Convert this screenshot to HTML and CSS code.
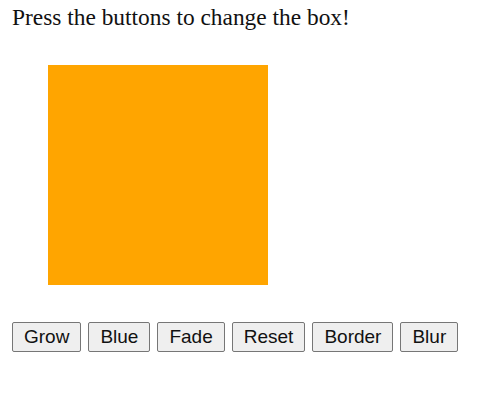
FILE: index.html
```html
<!DOCTYPE html>
<html>
<head>
<meta charset="utf-8">
<link rel="stylesheet" href="styles.css">
</head>
<body>
<div class="page">
  <p class="intro">Press the buttons to change the box!</p>
  <div class="box"></div>
  <div class="controls">
    <button class="btn">Grow</button>
    <button class="btn">Blue</button>
    <button class="btn">Fade</button>
    <button class="btn">Reset</button>
    <button class="btn">Border</button>
    <button class="btn">Blur</button>
  </div>
</div>
</body>
</html>
```

FILE: styles.css
```css
html, body {
  margin: 0;
  padding: 0;
  background: #ffffff;
}
.page {
  padding: 4px 12px 0 12px;
}
.intro {
  margin: 0;
  font-family: "Liberation Serif", "Times New Roman", serif;
  font-size: 23.4px;
  line-height: 26px;
  color: #111111;
}
.box {
  width: 220px;
  height: 220px;
  background: #ffa500;
  margin: 35px 0 0 36px;
}
.controls {
  display: flex;
  gap: 7px;
  margin-top: 37px;
}
.btn {
  font-family: "Liberation Sans", Arial, sans-serif;
  font-size: 19px;
  color: #111111;
  height: 30px;
  padding: 0 11px;
  margin: 0;
  background: #efefef;
  border: 1px solid #767676;
  border-radius: 2px;
  line-height: 28px;
}
```
